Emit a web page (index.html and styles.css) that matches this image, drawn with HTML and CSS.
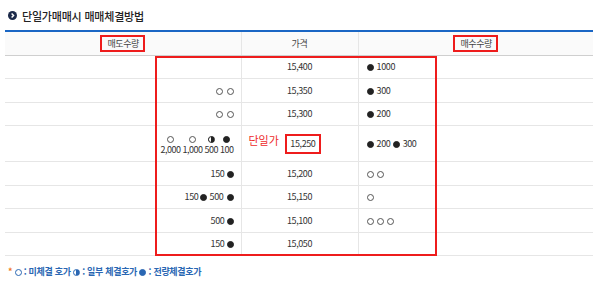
FILE: index.html
```html
<!DOCTYPE html>
<html lang="ko">
<head>
<meta charset="utf-8">
<link rel="stylesheet" href="styles.css">
</head>
<body>
<div class="page">
  <h2 class="title"><span class="ticon"><svg width="9" height="9" viewBox="0 0 10 10"><circle cx="5" cy="5" r="5" fill="#1c2a4a"/><path d="M4 2.8 L6.2 5 L4 7.2" stroke="#fff" stroke-width="1.6" fill="none"/></svg></span>단일가매매시 매매체결방법</h2>
  <div class="wrap">
    <table class="grid">
      <colgroup><col class="c1"><col class="c2"><col class="c3"></colgroup>
      <thead>
        <tr><th><span class="hl">매도수량</span></th><th>가격</th><th><span class="hl">매수수량</span></th></tr>
      </thead>
      <tbody>
        <tr><td class="sell"></td><td class="price">15,400</td><td class="buy"><i class="d f"></i> 1000</td></tr>
        <tr><td class="sell"><i class="d"></i> <i class="d"></i></td><td class="price">15,350</td><td class="buy"><i class="d f"></i> 300</td></tr>
        <tr><td class="sell"><i class="d"></i> <i class="d"></i></td><td class="price">15,300</td><td class="buy"><i class="d f"></i> 200</td></tr>
        <tr class="tall">
          <td class="sell">
            <span class="stack">
              <span class="it"><i class="d"></i><span>2,000</span></span>
              <span class="it"><i class="d"></i><span>1,000</span></span>
              <span class="it"><i class="d h"></i><span>500</span></span>
              <span class="it"><i class="d f"></i><span>100</span></span>
            </span>
          </td>
          <td class="price"><span class="label">단일가</span><span class="pbox">15,250</span></td>
          <td class="buy"><i class="d f"></i> 200 <i class="d f"></i> 300</td>
        </tr>
        <tr><td class="sell">150 <i class="d f"></i></td><td class="price">15,200</td><td class="buy"><i class="d"></i> <i class="d"></i></td></tr>
        <tr><td class="sell">150 <i class="d f"></i> 500 <i class="d f"></i></td><td class="price">15,150</td><td class="buy"><i class="d"></i></td></tr>
        <tr><td class="sell">500 <i class="d f"></i></td><td class="price">15,100</td><td class="buy"><i class="d"></i> <i class="d"></i> <i class="d"></i></td></tr>
        <tr><td class="sell">150 <i class="d f"></i></td><td class="price">15,050</td><td class="buy"></td></tr>
      </tbody>
    </table>
    <div class="bigbox"></div>
  </div>
  <p class="legend"><span class="star">*</span> <i class="d b"></i> : 미체결 호가 <i class="d bh"></i> : 일부 체결호가 <i class="d bf"></i> : 전량체결호가</p>
</div>
</body>
</html>
```
FILE: styles.css
```css
* { box-sizing: border-box; }
html, body { margin: 0; padding: 0; background: #fff; }
body { font-family: "Noto Sans CJK KR", "Noto Sans", sans-serif; color: #333; }
.page { width: 600px; height: 284px; padding: 5px 7px 0 5px; position: relative; }
.title { margin: 0; height: 21px; font-size: 11px; font-weight: 500; color: #222; display: flex; align-items: center; gap: 5px; padding-left: 3px; letter-spacing: -0.2px; }
.ticon { display: inline-flex; }
.wrap { position: relative; margin-top: 4px; }
.grid { width: 588px; border-collapse: collapse; border-top: 2px solid #1a66c4; font-size: 9px; letter-spacing: -0.4px; color: #333; }
.c1 { width: 236px; }
.c2 { width: 117px; }
.grid th { height: 24px; background: #fafafa; font-weight: 400; font-size: 9px; color: #444; border-bottom: 1px solid #cfcfcf; border-left: 1px solid #e6e6e6; padding: 0; }
.grid th:first-child, .grid td:first-child { border-left: none; }
.grid td { height: 23.5px; border-bottom: 1px solid #e6e6e6; border-left: 1px solid #e6e6e6; padding: 0; vertical-align: middle; }
.grid tr.tall td { height: 36px; }
.hl { display: inline-block; border: 2px solid #ee1c1c; padding: 1px 4px 1px 5px; line-height: 11px; }
.sell { text-align: right; padding-right: 7px !important; }
.price { text-align: center; }
.buy { text-align: left; padding-left: 8px !important; }
i.d { display: inline-block; width: 7px; height: 7px; border-radius: 50%; border: 1px solid #555; vertical-align: -1px; background: #fff; }
i.d.f { background: #222; border-color: #222; }
i.d.h { background: linear-gradient(90deg, #fff 50%, #222 50%); border-color: #222; }
.buy i.d { margin-right: 1px; }
.sell i.d + i.d { margin-left: 1px; }
.stack { display: inline-flex; gap: 2px; align-items: flex-end; letter-spacing: -0.5px; }
.it { display: inline-flex; flex-direction: column; align-items: center; gap: 2px; line-height: 10px; }
.price .label { color: #ee2a2a; font-size: 11px; letter-spacing: 0; margin-right: 4px; position: relative; left: -2px; top: -2px; }
.pbox { display: inline-block; border: 2px solid #ee1c1c; width: 36px; height: 20px; line-height: 16px; text-align: center; }
.tall .price { text-align: left; padding-left: 9px !important; }
.bigbox { position: absolute; left: 150px; top: 26px; width: 282px; height: 200px; border: 2px solid #ee1c1c; pointer-events: none; }
.legend { margin: 9px 0 0 3px; font-size: 9px; color: #2a67b3; font-weight: 700; letter-spacing: -0.3px; }
.legend .star { color: #f07a1e; }
i.d.b { border-color: #2a67b3; }
i.d.bh { border-color: #2a67b3; background: linear-gradient(90deg, #fff 50%, #2a67b3 50%); }
i.d.bf { border-color: #2a67b3; background: #2a67b3; }
```
